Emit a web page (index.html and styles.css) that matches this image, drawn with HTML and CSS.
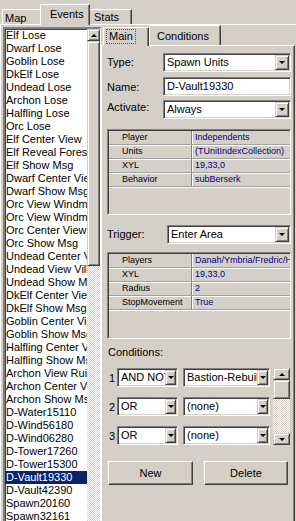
FILE: index.html
```html
<!DOCTYPE html>
<html>
<head>
<meta charset="utf-8">
<link rel="stylesheet" href="styles.css">
</head>
<body>
<div class="win">
  <div class="outer-tabs">
    <div class="tab t-map">Map</div>
    <div class="tab t-events active">Events</div>
    <div class="tab t-stats">Stats</div>
  </div>
  <div class="outer-page">
    <div class="listbox">
      <ul class="items">
        <li>Elf Lose</li>
        <li>Dwarf Lose</li>
        <li>Goblin Lose</li>
        <li>DkElf Lose</li>
        <li>Undead Lose</li>
        <li>Archon Lose</li>
        <li>Halfling Lose</li>
        <li>Orc Lose</li>
        <li>Elf Center View</li>
        <li>Elf Reveal Forest</li>
        <li>Elf Show Msg</li>
        <li>Dwarf Center View</li>
        <li>Dwarf Show Msg</li>
        <li>Orc View Windmill</li>
        <li>Orc View Windmill</li>
        <li>Orc Center View</li>
        <li>Orc Show Msg</li>
        <li>Undead Center View</li>
        <li>Undead View Village</li>
        <li>Undead Show Msg</li>
        <li>DkElf Center View</li>
        <li>DkElf Show Msg</li>
        <li>Goblin Center View</li>
        <li>Goblin Show Msg</li>
        <li>Halfling Center View</li>
        <li>Halfling Show Msg</li>
        <li>Archon View Ruins</li>
        <li>Archon Center View</li>
        <li>Archon Show Msg</li>
        <li>D-Water15110</li>
        <li>D-Wind56180</li>
        <li>D-Wind06280</li>
        <li>D-Tower17260</li>
        <li>D-Tower15300</li>
        <li class="sel">D-Vault19330</li>
        <li>D-Vault42390</li>
        <li>Spawn20160</li>
        <li>Spawn32161</li>
        <li>Spawn40112</li>
      </ul>
      <div class="vscroll">
        <div class="sbtn"><span class="arr up"></span></div>
        <div class="thumb"></div>
        <div class="track"></div>
      </div>
    </div>
    <div class="inner">
      <div class="inner-tabs">
        <div class="tab t-main active"><span class="focus">Main</span></div>
        <div class="tab t-cond">Conditions</div>
      </div>
      <div class="inner-page">
        <div class="frow r-type">
          <span class="lbl">Type:</span>
          <div class="combo w-type"><span class="ctext">Spawn Units</span><span class="dbtn"><span class="arr down"></span></span></div>
        </div>
        <div class="frow r-name">
          <span class="lbl">Name:</span>
          <div class="edit w-type"><span class="ctext">D-Vault19330</span></div>
        </div>
        <div class="frow r-act">
          <span class="lbl">Activate:</span>
          <div class="combo w-type"><span class="ctext">Always</span><span class="dbtn"><span class="arr down"></span></span></div>
        </div>

        <div class="pgrid g1">
          <div class="prow"><span class="pk">Player</span><span class="pv">Independents</span></div>
          <div class="prow"><span class="pk">Units</span><span class="pv">(TUnitIndexCollection)</span></div>
          <div class="prow"><span class="pk">XYL</span><span class="pv">19,33,0</span></div>
          <div class="prow"><span class="pk">Behavior</span><span class="pv">subBerserk</span></div>
        </div>

        <div class="frow r-trig">
          <span class="lbl">Trigger:</span>
          <div class="combo w-trig"><span class="ctext">Enter Area</span><span class="dbtn"><span class="arr down"></span></span></div>
        </div>

        <div class="pgrid g2">
          <div class="prow"><span class="pk">Players</span><span class="pv">Danah/Ymbria/Fredric/Hanna</span></div>
          <div class="prow"><span class="pk">XYL</span><span class="pv">19,33,0</span></div>
          <div class="prow"><span class="pk">Radius</span><span class="pv">2</span></div>
          <div class="prow"><span class="pk">StopMovement</span><span class="pv">True</span></div>
        </div>

        <div class="cond-label">Conditions:</div>
        <div class="cond-area">
          <div class="cond-rows">
            <div class="crow">
              <span class="cnum">1</span>
              <div class="combo w-op"><span class="ctext">AND NOT</span><span class="dbtn sm"><span class="arr down"></span></span></div>
              <div class="combo w-ev"><span class="ctext">Bastion-Rebuild</span><span class="dbtn sm"><span class="arr down"></span></span></div>
            </div>
            <div class="crow">
              <span class="cnum">2</span>
              <div class="combo w-op"><span class="ctext">OR</span><span class="dbtn sm"><span class="arr down"></span></span></div>
              <div class="combo w-ev"><span class="ctext">(none)</span><span class="dbtn sm"><span class="arr down"></span></span></div>
            </div>
            <div class="crow">
              <span class="cnum">3</span>
              <div class="combo w-op"><span class="ctext">OR</span><span class="dbtn sm"><span class="arr down"></span></span></div>
              <div class="combo w-ev"><span class="ctext">(none)</span><span class="dbtn sm"><span class="arr down"></span></span></div>
            </div>
          </div>
          <div class="cscroll">
            <div class="sbtn"><span class="arr up"></span></div>
            <div class="thumb"></div>
            <div class="track"></div>
            <div class="sbtn"><span class="arr down"></span></div>
          </div>
        </div>

        <div class="btns">
          <div class="btn b-new">New</div>
          <div class="btn b-del">Delete</div>
        </div>
      </div>
    </div>
  </div>
</div>
</body>
</html>
```

FILE: styles.css
```css
* { box-sizing: border-box; }
html, body { margin: 0; padding: 0; }
body {
  width: 296px;
  height: 521px;
  overflow: hidden;
  background: #d4d0c8;
  font-family: "Liberation Sans", Arial, sans-serif;
  font-size: 11px;
  color: #000;
}
.win { width: 296px; height: 521px; overflow: hidden; }

/* ---------- tabs ---------- */
.outer-tabs {
  display: flex;
  align-items: flex-end;
  height: 24px;
  padding-left: 2px;
}
.tab {
  position: relative;
  height: 15px;
  border: 1px solid;
  border-color: #fff #404040 transparent #fff;
  border-bottom: 0;
  box-shadow: inset -1px 0 #808080;
  background: #d4d0c8;
  line-height: 13px;
  white-space: nowrap;
}
.tab.active {
  z-index: 2;
  height: 20px;
  margin-bottom: -1px;
}
.t-map { width: 40px; padding-left: 2px; padding-top: 2px; }
.t-events { width: 50px; margin-left: -2px; padding-left: 9px; padding-top: 3px; }
.t-stats { width: 44px; margin-left: -2px; padding-left: 5px; padding-top: 1px; z-index: 1; }
.t-events.active { height: 21px; }

.outer-page {
  display: flex;
  align-items: flex-start;
  height: 497px;
  border-top: 1px solid #fff;
  border-left: 1px solid #fff;
  padding-left: 2px;
  padding-top: 2px;
}

/* ---------- listbox ---------- */
.listbox {
  display: flex;
  width: 98px;
  height: 520px;
  border-top: 2px solid #808080;
  border-left: 2px solid #808080;
  border-right: 1px solid #fff;
  box-shadow: inset 1px 1px #404040;
  background: #fff;
  padding: 0;
}
.items {
  list-style: none;
  margin: 0;
  padding: 0;
  width: 82px;
  overflow: hidden;
}
.items li {
  height: 13px;
  line-height: 13px;
  padding-left: 1px;
  white-space: nowrap;
  overflow: hidden;
}
.items li.sel { background: #0a246a; color: #fff; }

.vscroll {
  width: 13px;
  display: flex;
  flex-direction: column;
}
.sbtn {
  flex: none;
  height: 12px;
  display: flex;
  align-items: center;
  justify-content: center;
  background: #d4d0c8;
  border: 1px solid;
  border-color: #d4d0c8 #404040 #404040 #d4d0c8;
  box-shadow: inset 1px 1px #fff, inset -1px -1px #808080;
}
.thumb {
  flex: none;
  height: 225px;
  background: #d4d0c8;
  border: 1px solid;
  border-color: #d4d0c8 #404040 #404040 #d4d0c8;
  box-shadow: inset 1px 1px #fff, inset -1px -1px #808080;
}
.track {
  flex: 1;
  background: repeating-conic-gradient(#fff 0 25%, #d4d0c8 0 50%) 0 0 / 2px 2px;
}
.arr { width: 0; height: 0; border-left: 3px solid transparent; border-right: 3px solid transparent; }
.arr.up { border-bottom: 3px solid #000; }
.arr.down { border-top: 3px solid #000; }

/* ---------- inner tab control ---------- */
.inner {
  width: 194px;
  margin-top: -2px;
  display: flex;
  flex-direction: column;
}
.inner-tabs {
  display: flex;
  align-items: flex-end;
  height: 20px;
  padding-left: 2px;
}
.t-main { width: 46px; height: 18px; padding-left: 3px; padding-top: 2px; }
.t-main.active { height: 19px; }
.t-cond { width: 72px; height: 20px; margin-left: 0; padding-left: 7px; padding-top: 4px; }
.focus { display: inline-block; outline: 1px dotted #555; outline-offset: 0; padding: 0 2px; line-height: 13px; }

.inner-page {
  height: 480px;
  border-top: 1px solid #fff;
  border-left: 1px solid #fff;
  border-right: 1px solid #404040;
  box-shadow: inset -1px 0 #808080;
  padding-left: 5px;
  padding-top: 7px;
}

.frow { display: flex; align-items: flex-start; }
.lbl { display: block; line-height: 13px; }
.r-type .lbl { width: 56px; padding-top: 3px; }
.r-name { margin-top: 5px; }
.r-name .lbl { width: 56px; padding-top: 4px; }
.r-act { margin-top: 4px; }
.r-act .lbl { width: 56px; padding-top: 1px; }
.r-trig { margin-top: 10px; }
.r-trig .lbl { width: 60px; padding-top: 3px; }

.combo, .edit {
  position: relative;
  display: flex;
  align-items: center;
  height: 19px;
  background: #fff;
  border: 1px solid;
  border-color: #808080 #fff #fff #808080;
  box-shadow: inset 1px 1px #404040, inset -1px -1px #d4d0c8;
  padding-left: 3px;
  overflow: hidden;
}
.ctext { flex: 1; white-space: nowrap; overflow: hidden; line-height: 13px; }
.w-type { width: 128px; }
.w-trig { width: 124px; }
.dbtn {
  flex: none;
  width: 14px;
  height: 15px;
  margin-right: 1px;
  display: flex;
  align-items: center;
  justify-content: center;
  background: #d4d0c8;
  border: 1px solid;
  border-color: #d4d0c8 #404040 #404040 #d4d0c8;
  box-shadow: inset 1px 1px #fff, inset -1px -1px #808080;
}
.dbtn.sm { width: 11px; }

/* ---------- property grid ---------- */
.pgrid {
  width: 184px;
  height: 86px;
  border: 1px solid;
  border-color: #808080 #fff #fff #808080;
  box-shadow: inset 1px 1px #404040;
  padding: 1px 0 0 1px;
  font-size: 9px;
  overflow: hidden;
}
.g1 { margin-top: 10px; }
.g2 { margin-top: 8px; height: 87px; }
.prow {
  display: grid;
  grid-template-columns: 83px 1fr;
  height: 14px;
  border-bottom: 1px solid #a0a0a0;
  box-shadow: 0 1px 0 #fff;
}
.pk {
  padding-left: 13px;
  line-height: 13px;
  border-right: 1px solid #808080;
  box-shadow: 1px 0 #fff;
  white-space: nowrap;
  overflow: hidden;
}
.pv {
  padding-left: 3px;
  line-height: 13px;
  color: #000080;
  white-space: nowrap;
  overflow: hidden;
}

/* ---------- conditions ---------- */
.cond-label { margin-top: 7px; line-height: 13px; padding-left: 1px; }
.cond-area { display: flex; margin-top: 9px; }
.cond-rows { display: flex; flex-direction: column; gap: 10px; }
.crow { display: flex; align-items: center; height: 19px; }
.cnum { width: 10px; padding-left: 2px; }
.w-op { width: 61px; }
.w-ev { width: 87px; margin-left: 5px; }
.cscroll {
  width: 17px;
  height: 77px;
  margin-left: 3px;
  display: flex;
  flex-direction: column;
}
.cscroll .sbtn { height: 12px; }
.cscroll .thumb { height: 19px; }

/* ---------- buttons ---------- */
.btns { display: flex; margin-top: 16px; margin-left: 1px; gap: 11px; }
.btn {
  height: 24px;
  display: flex;
  align-items: center;
  justify-content: center;
  border: 1px solid;
  border-color: #fff #404040 #404040 #fff;
  box-shadow: inset -1px -1px #808080, inset 1px 1px #d4d0c8;
}
.b-new { width: 85px; }
.b-del { width: 84px; }
```
